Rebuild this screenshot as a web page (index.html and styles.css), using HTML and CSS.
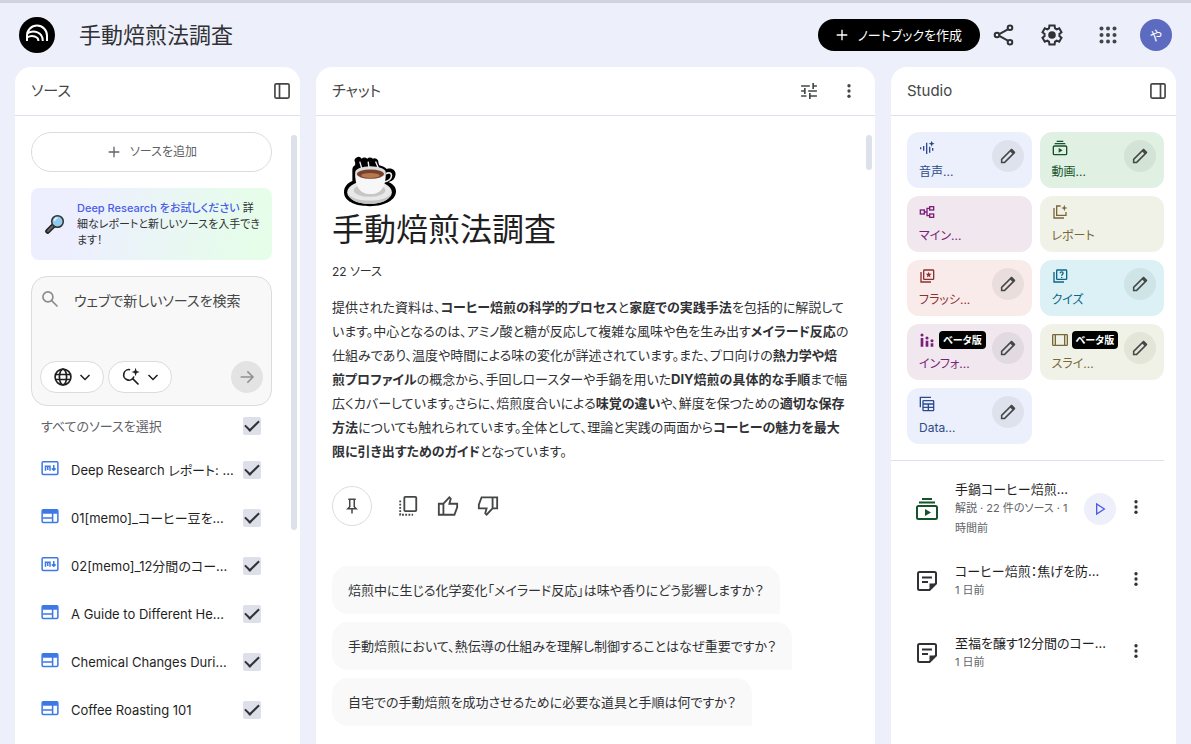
FILE: index.html
```html
<!DOCTYPE html>
<html lang="ja">
<head>
  <meta charset="UTF-8">
  <meta name="viewport" content="width=device-width, initial-scale=1.0">
  <title>手動焙煎法調査</title>
  <link rel="stylesheet" href="styles.css">
</head>
<body>
  <svg class="sprite" aria-hidden="true">
    <symbol id="i-plus" viewBox="0 0 24 24"><path d="M12 4v16M4 12h16"/></symbol>
    <symbol id="i-share" viewBox="0 0 24 24"><path d="M16.3 6.1L7.7 10.9M7.7 13.1l8.6 4.8"/><circle cx="18" cy="4.8" r="2.3"/><circle cx="5" cy="12" r="2.3"/><circle cx="18" cy="19.2" r="2.3"/></symbol>
    <symbol id="i-gear" viewBox="0 0 24 24"><path d="M19.4 13c.1-.7.1-1.300 0-2l2.100-1.650-2.300-4-2.500 1c-.5-.4-1.100-.75-1.700-1L14.600 2.500H9.400L9 5.350c-.6.25-1.200.6-1.700 1l-2.500-1-2.300 4L4.600 11c-.1.700-.1 1.300 0 2l-2.100 1.650 2.300 4 2.500-1c.5.4 1.100.75 1.700 1l.4 2.850h5.200l.4-2.850c.6-.25 1.200-.6 1.700-1l2.500 1 2.300-4z"/><circle class="solid" cx="12" cy="12" r="3.800"/></symbol>
    <symbol id="i-apps" viewBox="0 0 24 24"><g class="solid"><circle cx="5.500" cy="5.500" r="2"/><circle cx="12" cy="5.500" r="2"/><circle cx="18.500" cy="5.500" r="2"/><circle cx="5.500" cy="12" r="2"/><circle cx="12" cy="12" r="2"/><circle cx="18.500" cy="12" r="2"/><circle cx="5.500" cy="18.500" r="2"/><circle cx="12" cy="18.500" r="2"/><circle cx="18.500" cy="18.500" r="2"/></g></symbol>
    <symbol id="i-dock-left" viewBox="0 0 24 24"><rect x="3.500" y="3.500" width="17" height="17" rx="1.500"/><path d="M9 3v18"/></symbol>
    <symbol id="i-dock-right" viewBox="0 0 24 24"><rect x="3.500" y="3.500" width="17" height="17" rx="1.500"/><path d="M15 3v18"/></symbol>
    <symbol id="i-tune" viewBox="0 0 24 24"><path d="M2.500 6H13M17 6h4.500M17 2.500v7M2.500 12H7M11 12h10.500M7 8.500v7M2.500 18H9M13 18h8.500M13 14.500v7"/></symbol>
    <symbol id="i-more" viewBox="0 0 24 24"><g class="solid"><circle cx="12" cy="5" r="2.200"/><circle cx="12" cy="12" r="2.200"/><circle cx="12" cy="19" r="2.200"/></g></symbol>
    <symbol id="i-search" viewBox="0 0 24 24"><circle cx="9.500" cy="9.500" r="6"/><path d="M14 14l7 7"/></symbol>
    <symbol id="i-globe" viewBox="0 0 24 24"><circle cx="12" cy="12" r="9.500"/><ellipse cx="12" cy="12" rx="4.300" ry="9.500"/><path d="M3 9h18M3 15h18"/></symbol>
    <symbol id="i-spark-search" viewBox="0 0 24 24"><path d="M11 3.300A6.300 6.300 0 1 0 15.500 11.500M14 14l7 7"/><path class="solid" d="M17.500 1l1.300 3.700 3.700 1.300-3.700 1.300-1.300 3.700-1.300-3.700L12.500 6l3.700-1.300z"/></symbol>
    <symbol id="i-down" viewBox="0 0 24 24"><path d="M3 8l9 9 9-9"/></symbol>
    <symbol id="i-arrow" viewBox="0 0 24 24"><path d="M3.500 12h16M12.500 4.500L20 12l-7.500 7.500"/></symbol>
    <symbol id="i-md" viewBox="0 0 24 24"><rect x="1.500" y="3.500" width="21" height="17" rx="1.500"/><path d="M6 15.500V9.500h6v6M9 9.500v5M17 8v7M14.500 12.500L17 15l2.500-2.500"/></symbol>
    <symbol id="i-web" viewBox="0 0 24 24"><rect x="1.500" y="3.500" width="21" height="17" rx="1.500"/><path class="solid" d="M2 4h20v5H2z"/><path d="M2 14.500h13M15.500 8v12"/></symbol>
    <symbol id="i-pin" viewBox="0 0 24 24"><path d="M7 3h10M9 3v10l-2.500 2.500h11L15 13V3M12 15.500V22"/></symbol>
    <symbol id="i-copy" viewBox="0 0 24 24"><rect x="8" y="2" width="13" height="15.500" rx="1"/><path stroke-dasharray="2 1.500" d="M3.500 6v15.500h14"/></symbol>
    <symbol id="i-thumb" viewBox="0 0 24 24"><path d="M2 9.500h5v12H2zM7 9.500l6.500-7 1.500 1.500-1.500 5.500H22v4l-3 8H7"/></symbol>
    <symbol id="i-wave" viewBox="0 0 24 24"><path d="M2.500 11v3M7 9v7M11.500 4v17M16 10v9M20.500 12v4"/><path class="solid" d="M19 1l1.200 3.300L23.500 5.500l-3.300 1.200L19 10l-1.200-3.300L14.500 5.500l3.300-1.200z"/></symbol>
    <symbol id="i-video" viewBox="0 0 24 24"><rect x="2" y="9" width="20" height="13" rx="1.500"/><path d="M4 5.500h16M7 2h10"/><path class="solid" d="M10 12v7l6-3.500z"/></symbol>
    <symbol id="i-map" viewBox="0 0 24 24"><rect x="2" y="9" width="6" height="6"/><rect x="16" y="4" width="6" height="5"/><rect x="16" y="15" width="6" height="5"/><path d="M8 12h4M16 6.500h-4v11h4"/></symbol>
    <symbol id="i-report" viewBox="0 0 24 24"><path d="M13 3H7v14h14v-5M3 6v15h15"/><path class="solid" d="M18.500 1l1.300 3.700 3.700 1.300-3.700 1.300-1.300 3.700-1.300-3.700L13.500 6l3.700-1.300z"/></symbol>
    <symbol id="i-cards" viewBox="0 0 24 24"><path d="M3 6v15h15"/><rect x="7" y="3" width="15" height="14" rx="1"/><path class="solid" d="M14.500 5.500l1.200 3.200 3.300.1-2.600 2 .9 3.200-2.800-1.800-2.800 1.800.9-3.200-2.600-2 3.300-.1z"/></symbol>
    <symbol id="i-quiz" viewBox="0 0 24 24"><path d="M3 6v15h15"/><rect x="7" y="3" width="15" height="14" rx="1"/><path d="M12.300 8c0-3 4.400-2.800 4.400 0 0 1.500-2.200 1.800-2.200 3.500M14.500 13.500v1.500"/></symbol>
    <symbol id="i-info" viewBox="0 0 24 24"><path stroke-width="4" d="M4.500 9v13M12 13v9M19.500 17v5"/><g class="solid"><circle cx="4.500" cy="4.500" r="2.300"/><circle cx="12" cy="9" r="2.300"/><circle cx="19.500" cy="13" r="2.300"/></g></symbol>
    <symbol id="i-slides" viewBox="0 0 24 24"><rect x="1" y="4" width="22" height="16" rx="1"/><path d="M5 4v16M19 4v16"/></symbol>
    <symbol id="i-table" viewBox="0 0 24 24"><path d="M2 17V2h16"/><rect x="6" y="7" width="16" height="15" rx="1"/><path d="M6 12h16M6 17h16M14 12v10"/></symbol>
    <symbol id="i-pencil" viewBox="0 0 24 24"><path d="M3.500 20.500v-4L16.500 3.500l4 4L7.500 20.500z"/><path class="solid" d="M14.500 5.500l3-3 4 4-3 3z"/></symbol>
    <symbol id="i-note" viewBox="0 0 24 24"><path d="M14.500 21H4.500Q3 21 3 19.500v-15Q3 3 4.500 3h15Q21 3 21 4.500v10zM7 8.500h10M7 13h6"/><path class="solid" d="M14.500 21v-6.500H21z"/></symbol>
    <symbol id="i-play" viewBox="0 0 24 24"><path d="M7 4.500v15L18.500 12z"/></symbol>
  </svg>

  <header class="topbar">
    <a class="logo" href="#" aria-label="ホーム">
      <svg viewBox="0 0 36 36">
        <circle cx="18" cy="18" r="18" fill="#000"/>
        <g fill="none" stroke="#fff" stroke-width="2">
          <path d="M8 24V18.500a10 10 0 0 1 20 0V24"/>
          <path d="M8 16.500c7-4.500 15.800-.8 15.800 7.500"/>
          <path d="M8 20.500c5.400-3 11.400-.8 11.400 3.500"/>
        </g>
      </svg>
    </a>
    <h1 class="notebook-title">手動焙煎法調査</h1>
    <button class="create-button"><svg class="icon icon-16"><use href="#i-plus"/></svg>ノートブックを作成</button>
    <button class="icon-button" aria-label="共有"><svg class="icon icon-24"><use href="#i-share"/></svg></button>
    <button class="icon-button settings" aria-label="設定"><svg class="icon icon-24"><use href="#i-gear"/></svg></button>
    <button class="icon-button apps" aria-label="アプリ"><svg class="icon icon-24"><use href="#i-apps"/></svg></button>
    <button class="avatar">や</button>
  </header>

  <main class="layout">
    <section class="panel">
      <div class="panel-header">
        <h2>ソース</h2>
        <button class="icon-button dock" aria-label="ソースを閉じる"><svg class="icon icon-20"><use href="#i-dock-left"/></svg></button>
      </div>
      <div class="sources">
        <button class="add-source"><svg class="icon icon-16"><use href="#i-plus"/></svg>ソースを追加</button>
        <div class="promo">
          <svg class="magnifier" viewBox="0 0 20 20">
            <path d="M8.500 11.500L2.700 17.300" stroke="#222" stroke-width="5" stroke-linecap="round"/>
            <path d="M8 12l-5 5" stroke="#666" stroke-width="2" stroke-linecap="round"/>
            <circle cx="12.500" cy="7.500" r="5.800" fill="#90caf0" stroke="#333" stroke-width="1.500"/>
            <path d="M9.500 7a3 3 0 0 1 3-3" stroke="#e3f4ff" stroke-width="1.500" fill="none"/>
          </svg>
          <p><a href="#">Deep Research をお試しください</a> 詳細なレポートと新しいソースを入手できます！</p>
        </div>
        <div class="search-box">
          <div class="search-field">
            <svg class="icon icon-20"><use href="#i-search"/></svg>
            <textarea rows="1" placeholder="ウェブで新しいソースを検索" aria-label="ウェブで新しいソースを検索"></textarea>
          </div>
          <div class="search-tools">
            <button class="pill" aria-label="ウェブ"><svg class="icon icon-20"><use href="#i-globe"/></svg><svg class="icon icon-12"><use href="#i-down"/></svg></button>
            <button class="pill" aria-label="Fast Research"><svg class="icon icon-20"><use href="#i-spark-search"/></svg><svg class="icon icon-12"><use href="#i-down"/></svg></button>
            <button class="send" aria-label="送信"><svg class="icon icon-18"><use href="#i-arrow"/></svg></button>
          </div>
        </div>
        <label class="select-all"><span>すべてのソースを選択</span><input type="checkbox" checked></label>
        <label class="source"><svg class="icon icon-18"><use href="#i-md"/></svg><span>Deep Research レポート: ...</span><input type="checkbox" checked></label>
        <label class="source"><svg class="icon icon-18"><use href="#i-web"/></svg><span>01[memo]_コーヒー豆を...</span><input type="checkbox" checked></label>
        <label class="source"><svg class="icon icon-18"><use href="#i-md"/></svg><span>02[memo]_12分間のコー...</span><input type="checkbox" checked></label>
        <label class="source"><svg class="icon icon-18"><use href="#i-web"/></svg><span>A Guide to Different He...</span><input type="checkbox" checked></label>
        <label class="source"><svg class="icon icon-18"><use href="#i-web"/></svg><span>Chemical Changes Duri...</span><input type="checkbox" checked></label>
        <label class="source"><svg class="icon icon-18"><use href="#i-web"/></svg><span>Coffee Roasting 101</span><input type="checkbox" checked></label>
      </div>
      <div class="scroll-thumb sources-thumb"></div>
    </section>

    <section class="panel">
      <div class="panel-header">
        <h2>チャット</h2>
        <button class="icon-button" aria-label="チャットを設定"><svg class="icon icon-20"><use href="#i-tune"/></svg></button>
        <button class="icon-button more" aria-label="その他"><svg class="icon icon-18"><use href="#i-more"/></svg></button>
      </div>
      <div class="chat">
        <svg class="cup" viewBox="-1 -3 58 56">
          <path d="M12 4a4 4 0 0 1 7-4 4 4 0 0 1 6 0 4 4 0 0 1 6 0 4 4 0 0 1 6 4l1 3c4 1 6 2 8 4 7-2 11 3 9 8-1 4-4 5-7 6 6 3 8 6 8 10 0 9-11 16-28 16S0 45 0 36c0-6 4-10 9-12V13c0-4 1-5 3-6z" fill="#000"/>
          <ellipse cx="27.500" cy="36" rx="24" ry="12.500" fill="#e8e8e8"/>
          <path d="M4 37c2 8 12 11.500 23.500 11.500S49 45 51 37c-4 6-13 8-23.500 8S8 43 4 37z" fill="#c4c4c4"/>
          <ellipse cx="27.500" cy="34" rx="17" ry="7" fill="#c7c7c7"/>
          <path d="M45 16c8-4 9 7-2 9" fill="none" stroke="#eee" stroke-width="1.800"/>
          <path d="M12 16h33c0 12-4 22-16.500 22S12 28 12 16z" fill="#f7f7f7"/>
          <ellipse cx="28.500" cy="15" rx="16.500" ry="7" fill="#ddd"/>
          <ellipse cx="28.500" cy="16.500" rx="14.500" ry="5" fill="#77412c"/>
          <ellipse cx="28.500" cy="18" rx="10" ry="2.800" fill="#b5794d"/>
          <path d="M17 3l2 7M26 3l1 7M34 3l3 7" stroke="#eee" stroke-width="1.500"/>
        </svg>
        <h2 class="chat-title">手動焙煎法調査</h2>
        <p class="source-count">22 ソース</p>
        <p class="summary">
          提供された資料は、<b>コーヒー焙煎の科学的プロセス</b>と<b>家庭での実践手法</b>を包括的に解説して<br>
          います。中心となるのは、アミノ酸と糖が反応して複雑な風味や色を生み出す<b>メイラード反応</b>の<br>
          仕組みであり、温度や時間による味の変化が詳述されています。また、プロ向けの<b>熱力学や焙<br>
          煎プロファイル</b>の概念から、手回しロースターや手鍋を用いた<b>DIY焙煎の具体的な手順</b>まで幅<br>
          広くカバーしています。さらに、焙煎度合いによる<b>味覚の違い</b>や、鮮度を保つための<b>適切な保存<br>
          方法</b>についても触れられています。全体として、理論と実践の両面から<b>コーヒーの魅力を最大<br>
          限に引き出すためのガイド</b>となっています。
        </p>
        <div class="actions">
          <button class="pin" aria-label="メモに保存"><svg class="icon icon-18"><use href="#i-pin"/></svg></button>
          <button class="icon-button" aria-label="コピー"><svg class="icon icon-22"><use href="#i-copy"/></svg></button>
          <button class="icon-button" aria-label="高評価"><svg class="icon icon-22"><use href="#i-thumb"/></svg></button>
          <button class="icon-button" aria-label="低評価"><svg class="icon icon-22 flipped"><use href="#i-thumb"/></svg></button>
        </div>
        <div class="questions">
          <button>焙煎中に生じる化学変化「メイラード反応」は味や香りにどう影響しますか？</button>
          <button>手動焙煎において、熱伝導の仕組みを理解し制御することはなぜ重要ですか？</button>
          <button>自宅での手動焙煎を成功させるために必要な道具と手順は何ですか？</button>
        </div>
      </div>
      <div class="scroll-thumb chat-thumb"></div>
    </section>

    <section class="panel">
      <div class="panel-header">
        <h2>Studio</h2>
        <button class="icon-button dock" aria-label="Studio を閉じる"><svg class="icon icon-20"><use href="#i-dock-right"/></svg></button>
      </div>
      <div class="tools">
        <div class="tool blue"><div class="tool-main"><svg class="icon icon-16"><use href="#i-wave"/></svg><span>音声...</span></div><button class="edit" aria-label="音声を編集"><svg class="icon icon-18"><use href="#i-pencil"/></svg></button></div>
        <div class="tool green"><div class="tool-main"><svg class="icon icon-16"><use href="#i-video"/></svg><span>動画...</span></div><button class="edit" aria-label="動画を編集"><svg class="icon icon-18"><use href="#i-pencil"/></svg></button></div>
        <div class="tool purple"><div class="tool-main"><svg class="icon icon-16"><use href="#i-map"/></svg><span>マイン...</span></div></div>
        <div class="tool olive"><div class="tool-main"><svg class="icon icon-16"><use href="#i-report"/></svg><span>レポート</span></div></div>
        <div class="tool red"><div class="tool-main"><svg class="icon icon-16"><use href="#i-cards"/></svg><span>フラッシ...</span></div><button class="edit" aria-label="フラッシュカードを編集"><svg class="icon icon-18"><use href="#i-pencil"/></svg></button></div>
        <div class="tool cyan"><div class="tool-main"><svg class="icon icon-16"><use href="#i-quiz"/></svg><span>クイズ</span></div><button class="edit" aria-label="クイズを編集"><svg class="icon icon-18"><use href="#i-pencil"/></svg></button></div>
        <div class="tool purple"><div class="tool-main"><div class="tool-top"><svg class="icon icon-16"><use href="#i-info"/></svg><em class="beta">ベータ版</em></div><span>インフォ...</span></div><button class="edit" aria-label="インフォグラフィックを編集"><svg class="icon icon-18"><use href="#i-pencil"/></svg></button></div>
        <div class="tool olive"><div class="tool-main"><div class="tool-top"><svg class="icon icon-16"><use href="#i-slides"/></svg><em class="beta">ベータ版</em></div><span>スライ...</span></div><button class="edit" aria-label="スライドを編集"><svg class="icon icon-18"><use href="#i-pencil"/></svg></button></div>
        <div class="tool blue"><div class="tool-main"><svg class="icon icon-16"><use href="#i-table"/></svg><span>Data...</span></div><button class="edit" aria-label="Data Table を編集"><svg class="icon icon-18"><use href="#i-pencil"/></svg></button></div>
      </div>
      <div class="artifacts">
        <div class="artifact">
          <svg class="icon icon-24 video"><use href="#i-video"/></svg>
          <div class="artifact-text"><h3>手鍋コーヒー焙煎...</h3><p>解説 · 22 件のソース · 1<br>時間前</p></div>
          <button class="play" aria-label="再生"><svg class="icon icon-16"><use href="#i-play"/></svg></button>
          <button class="icon-button more" aria-label="その他"><svg class="icon icon-18"><use href="#i-more"/></svg></button>
        </div>
        <div class="artifact">
          <svg class="icon icon-24"><use href="#i-note"/></svg>
          <div class="artifact-text"><h3>コーヒー焙煎：焦げを防...</h3><p>1 日前</p></div>
          <button class="icon-button more" aria-label="その他"><svg class="icon icon-18"><use href="#i-more"/></svg></button>
        </div>
        <div class="artifact">
          <svg class="icon icon-24"><use href="#i-note"/></svg>
          <div class="artifact-text"><h3>至福を醸す12分間のコー...</h3><p>1 日前</p></div>
          <button class="icon-button more" aria-label="その他"><svg class="icon icon-18"><use href="#i-more"/></svg></button>
        </div>
      </div>
    </section>
  </main>
</body>
</html>
```
FILE: styles.css
```css
* {
  box-sizing: border-box;
}

body {
  margin: 0;
  height: 100vh;
  display: flex;
  flex-direction: column;
  overflow: hidden;
  background-color: #edeffa;
  border-top: 3px solid #d0d3de;
  color: #303134;
  font-family: Inter, "Noto Sans CJK JP", sans-serif;
  font-feature-settings: "palt";
  font-size: 13px;
  line-height: 20px;
}

h1, h2, h3, p {
  margin: 0;
  font-weight: 400;
}

button, textarea {
  font: inherit;
  font-feature-settings: inherit;
  color: inherit;
}

button {
  display: flex;
  align-items: center;
  justify-content: center;
  padding: 0;
  border: none;
  background: none;
  cursor: pointer;
}

.sprite {
  display: none;
}

/* icons */
.icon {
  flex: none;
  display: block;
  fill: none;
  stroke: currentColor;
  stroke-width: 2;
}

.solid {
  fill: currentColor;
  stroke: none;
}

.icon-12 { width: 12px; height: 12px; stroke-width: 3; }
.icon-16 { width: 16px; height: 16px; }
.icon-18 { width: 18px; height: 18px; }
.icon-20 { width: 20px; height: 20px; }
.icon-22 { width: 22px; height: 22px; }
.icon-24 { width: 24px; height: 24px; }

.flipped {
  transform: rotate(180deg);
}

.icon-button {
  width: 40px;
  height: 40px;
  border-radius: 50%;
}

/* top bar */
.topbar {
  flex: none;
  display: flex;
  align-items: center;
  height: 64px;
  padding: 0 19px;
}

.logo svg {
  display: block;
  width: 36px;
  height: 36px;
}

.notebook-title {
  flex: 1;
  margin-left: 24px;
  font-size: 22px;
  line-height: 28px;
}

.create-button {
  gap: 8px;
  height: 32px;
  margin-right: 4px;
  padding: 0 18px 0 16px;
  border-radius: 16px;
  background-color: #000;
  color: #fff;
}

.settings {
  margin-left: 8px;
}

.apps {
  margin: 0 12px 0 16px;
  color: #444746;
}

.avatar {
  width: 32px;
  height: 32px;
  border-radius: 50%;
  background-color: #5c6bc0;
  color: #fff;
}

/* panels */
.layout {
  flex: 1;
  min-height: 0;
  display: grid;
  grid-template-columns: 285px 1fr 285px;
  gap: 16px;
  padding: 0 15px;
}

.panel {
  position: relative;
  overflow: hidden;
  border-radius: 16px 16px 0 0;
  background-color: #fff;
}

.panel-header {
  display: flex;
  align-items: center;
  height: 49px;
  padding-left: 16px;
  border-bottom: 1px solid #dde1eb;
  color: #444746;
}

.panel-header h2 {
  flex: 1;
  font-size: 15px;
  line-height: 24px;
}

.dock {
  width: 36px;
}

.more {
  margin-right: 6px;
}

.scroll-thumb {
  position: absolute;
  top: 68px;
  right: 3px;
  width: 6px;
  border-radius: 3px;
  background-color: #dde1eb;
}

.sources-thumb {
  height: 395px;
}

.chat-thumb {
  height: 35px;
}

/* sources */
.sources {
  padding: 16px 28px 0 16px;
}

.add-source {
  gap: 8px;
  width: 100%;
  height: 40px;
  border: 1px solid #dadce0;
  border-radius: 20px;
  color: #5f6368;
  font-size: 12px;
}

.promo {
  display: flex;
  align-items: center;
  gap: 12px;
  height: 72px;
  margin: 16px 0;
  padding: 0 10px 0 14px;
  border-radius: 8px;
  background: linear-gradient(100deg, #edefff 20%, #e6fdea 90%);
  font-size: 11px;
  line-height: 16px;
}

.promo a {
  color: #4a5ce8;
  font-weight: 500;
  text-decoration: none;
}

.magnifier {
  flex: none;
  width: 20px;
  height: 20px;
}

.search-box {
  display: flex;
  flex-direction: column;
  justify-content: space-between;
  height: 130px;
  padding: 12px 8px;
  border: 1px solid #dadce0;
  border-radius: 16px;
  background-color: #f8f8f8;
}

.search-field {
  display: flex;
  gap: 14px;
  color: #8a8c90;
}

.search-field textarea {
  flex: 1;
  min-width: 0;
  height: 24px;
  padding: 0;
  border: none;
  outline: none;
  resize: none;
  overflow: hidden;
  background: none;
  font-size: 14px;
  line-height: 24px;
}

.search-field textarea::placeholder {
  color: #444746;
}

.search-tools {
  display: flex;
  gap: 4px;
}

.pill {
  gap: 6px;
  width: 64px;
  height: 32px;
  border: 1px solid #dadce0;
  border-radius: 16px;
  background-color: #fff;
  color: #1f1f1f;
}

.send {
  width: 32px;
  height: 32px;
  margin-left: auto;
  border-radius: 50%;
  background-color: #e3e3e3;
  color: #919191;
}

.select-all, .source {
  display: flex;
  align-items: center;
  padding: 0 11px 0 10px;
}

.select-all {
  justify-content: space-between;
  height: 40px;
  color: #5f6368;
}

.source {
  height: 48px;
  color: #1f1f1f;
}

.source .icon {
  margin: 0 12px 4px 0;
  color: #3c78e6;
}

.source span {
  flex: 1;
  white-space: nowrap;
}

input[type="checkbox"] {
  appearance: none;
  display: grid;
  place-items: center;
  flex: none;
  width: 18px;
  height: 18px;
  margin: 0;
  border-radius: 2px;
  background-color: #dde0ea;
}

input[type="checkbox"]:checked::before {
  content: "";
  width: 12px;
  height: 6px;
  margin-bottom: 4px;
  border-left: 2px solid #303134;
  border-bottom: 2px solid #303134;
  transform: rotate(-45deg);
}

/* chat */
.chat {
  padding: 40px 20px 0 16px;
}

.cup {
  display: block;
  width: 58px;
  height: 52px;
  margin-left: 9px;
}

.chat-title {
  font-size: 32px;
  line-height: 44px;
  color: #1f1f1f;
}

.source-count {
  margin-top: 12px;
  font-size: 12px;
  line-height: 16px;
}

.summary {
  margin-top: 15px;
  line-height: 24px;
}

.actions {
  display: flex;
  align-items: center;
  margin-top: 23px;
  color: #444746;
}

.pin {
  width: 40px;
  height: 40px;
  margin-right: 16px;
  border: 1px solid #dadce0;
  border-radius: 50%;
}

.questions {
  display: flex;
  flex-direction: column;
  align-items: flex-start;
  gap: 8px;
  margin-top: 40px;
}

.questions button {
  height: 48px;
  padding: 0 16px;
  border-radius: 16px 16px 0 16px;
  background-color: #f9f9f9;
}

/* studio */
.tools {
  display: grid;
  grid-template-columns: 1fr 1fr;
  gap: 8px;
  margin-right: 12px;
  padding: 16px 0 16px 16px;
  border-bottom: 1px solid #dde1eb;
}

.tool {
  display: flex;
  justify-content: space-between;
  height: 56px;
  padding: 8px 8px 8px 12px;
  border-radius: 12px;
  font-size: 12px;
  line-height: 16px;
}

.tool-main {
  display: flex;
  flex-direction: column;
  justify-content: space-between;
}

.tool-top {
  display: flex;
  align-items: center;
  gap: 4px;
  height: 16px;
}

.beta {
  padding: 1px 4px;
  border-radius: 4px;
  background-color: #000;
  color: #fff;
  font-size: 10px;
  font-style: normal;
  font-weight: 700;
}

.edit, .play {
  flex: none;
  width: 32px;
  height: 32px;
  border-radius: 50%;
}

.edit {
  background-color: rgba(68, 71, 70, 0.08);
  color: #444746;
}

.blue { background-color: #eceffc; color: #2d4b8c; }
.green { background-color: #e0f1e3; color: #14532b; }
.purple { background-color: #f0e7ef; color: #7a1f78; }
.olive { background-color: #f1f2e7; color: #7a6738; }
.red { background-color: #f9ebea; color: #8c3030; }
.cyan { background-color: #dcf1f6; color: #0b6686; }

.artifacts {
  padding: 12px 0 0 24px;
}

.artifact {
  display: flex;
  align-items: center;
  height: 72px;
}

.artifact-text {
  flex: 1;
  min-width: 0;
  margin-left: 16px;
}

.artifact h3 {
  font-size: 13px;
  line-height: 18px;
  white-space: nowrap;
  color: #1f1f1f;
}

.artifact p {
  font-size: 11px;
  line-height: 20px;
  color: #5f6368;
}

.artifact .more {
  margin: 0 20px 4px 0;
}

.video {
  color: #14532b;
}

.play {
  background-color: #edeffa;
  color: #4a5ce8;
}
```
